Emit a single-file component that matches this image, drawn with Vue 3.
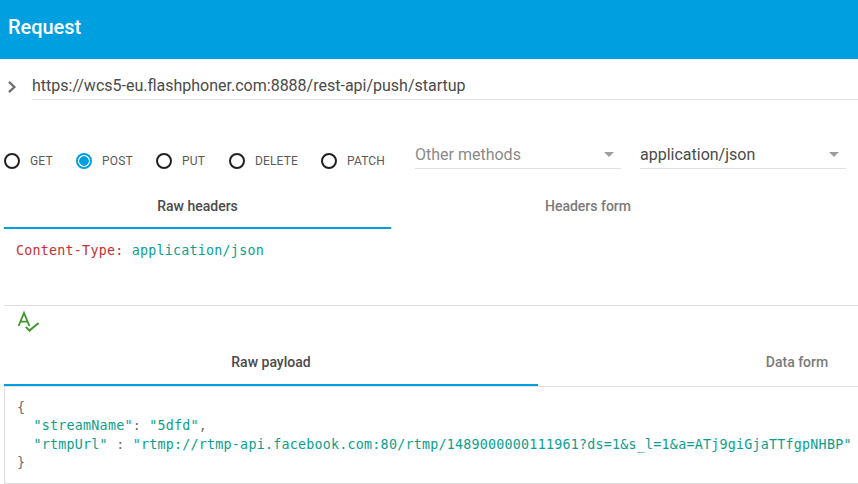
<script setup>
const methods = [
  { name: 'GET', checked: false, w: 72 },
  { name: 'POST', checked: true, w: 80 },
  { name: 'PUT', checked: false, w: 73 },
  { name: 'DELETE', checked: false, w: 92 },
  { name: 'PATCH', checked: false, w: 85 },
]
</script>

<template>
  <div class="page">
    <header class="bar">Request</header>
    <div class="url-row">
      <svg class="chev" width="12" height="14" viewBox="0 0 12 14"><path d="M3 1.8 L8.4 7 L3 12.2" fill="none" stroke="#6f6f6f" stroke-width="2.3"/></svg>
      <div class="url">https://wcs5-eu.flashphoner.com:8888/rest-api/push/startup</div>
    </div>
    <div class="method-row">
      <div class="radios">
        <div v-for="m in methods" :key="m.name" class="radio" :style="{ width: m.w + 'px' }">
          <span class="dot" :class="{ on: m.checked }"></span>
          <span class="label">{{ m.name }}</span>
        </div>
      </div>
      <div class="select other"><span>Other methods</span><i class="caret"></i></div>
      <div class="select ctype"><span>application/json</span><i class="caret"></i></div>
    </div>
    <div class="tabs headers-tabs">
      <div class="tab active t1">Raw headers</div>
      <div class="tab t2">Headers form</div>
    </div>
    <div class="editor head-ed">
      <div class="code"><span class="red">Content-Type:</span> <span class="teal">application/json</span></div>
    </div>
    <div class="lint">
      <svg width="24" height="24" viewBox="0 0 24 24"><path d="M1.6 16 L7 3 L12.4 16 M3.6 11.6 H10.4" fill="none" stroke="#43982d" stroke-width="1.9"/><path d="M8.8 16.8 L12.4 20.6 L21.6 13" fill="none" stroke="#43982d" stroke-width="1.9"/></svg>
    </div>
    <div class="tabs payload-tabs">
      <div class="tab active p1">Raw payload</div>
      <div class="tab p2">Data form</div>
    </div>
    <div class="payload code">
      <div class="gray">{</div>
      <div class="ind"><span class="teal">"streamName"</span><span class="gray">:</span> <span class="teal">"5dfd"</span><span class="gray">,</span></div>
      <div class="ind"><span class="teal">"rtmpUrl"</span> <span class="gray">:</span> <span class="teal">"rtmp://rtmp-api.facebook.com:80/rtmp/1489000000111961?ds=1&amp;s_l=1&amp;a=ATj9giGjaTTfgpNHBP"</span></div>
      <div class="gray">}</div>
    </div>
  </div>
</template>

<style>
html, body { margin: 0; background: #fff; overflow: hidden; }
</style>

<style scoped>
.page { width: 858px; height: 484px; overflow: hidden; font-family: Roboto, sans-serif; color: #424242; background: #fff; }
.bar { height: 59px; background: #00a0e0; color: #fff; font-size: 20px; font-weight: 500; letter-spacing: -.05px; line-height: 54px; padding-left: 8px; box-sizing: border-box; }
.url-row { display: flex; align-items: flex-start; height: 41px; padding-left: 6px; }
.chev { margin-top: 21px; margin-right: 14px; flex: none; }
.url { flex: 1; height: 41px; box-sizing: border-box; border-bottom: 1px solid #e0e0e0; font-size: 16px; line-height: 53px; color: #4a4a4a; white-space: nowrap; }
.method-row { display: flex; align-items: flex-start; height: 87px; padding-top: 40px; box-sizing: border-box; padding-left: 4px; }
.radios { display: flex; width: 411px; flex: none; padding-top: 13px; }
.radio { display: flex; align-items: center; height: 16px; flex: none; }
.dot { width: 16px; height: 16px; box-sizing: border-box; border: 2px solid #212121; border-radius: 50%; margin-right: 10px; flex: none; }
.dot.on { border-color: #00a0e0; background: radial-gradient(circle, #00a0e0 0 4.5px, #fff 5px); }
.label { font-size: 12px; letter-spacing: .15px; color: #5a5a5a; }
.select { display: flex; align-items: center; justify-content: space-between; height: 29px; box-sizing: border-box; border-bottom: 1px solid #e0e0e0; font-size: 16px; line-height: 30px; padding-right: 7px; flex: none; }
.select span { position: relative; top: 1px; }
.other { width: 206px; color: #8a8a8a; margin-right: 19px; }
.ctype { width: 206px; color: #4a4a4a; }
.caret { width: 0; height: 0; border-left: 5px solid transparent; border-right: 5px solid transparent; border-top: 5px solid #9e9e9e; margin-top: 1px; }
.tabs { display: flex; margin-left: 4px; font-size: 14px; font-weight: 500; }
.tab { text-align: center; box-sizing: border-box; color: #7a7a7a; flex: none; }
.tab.active { color: #4a4a4a; border-bottom: 2px solid #00a0e0; }
.headers-tabs { height: 42px; }
.t1 { width: 387px; height: 42px; line-height: 38px; }
.t2 { width: 394px; line-height: 38px; }
.code { font-family: "DejaVu Sans Mono", monospace; font-size: 13.33px; letter-spacing: .24px; line-height: 19px; white-space: pre; }
.red { color: #c62f30; }
.teal { color: #0b9e8e; }
.gray { color: #6e6e6e; }
.ind { padding-left: 16.5px; }
.head-ed { height: 77px; margin-left: 4px; box-sizing: border-box; border-bottom: 1px solid #e0e0e0; padding: 12px 0 0 12px; }
.lint { height: 35px; padding: 4px 0 0 17px; box-sizing: border-box; }
.lint svg { display: block; }
.payload-tabs { height: 45px; border-bottom: 1px solid #e0e0e0; box-sizing: content-box; }
.p1 { width: 534px; height: 45px; line-height: 43px; }
.p2 { width: 518px; line-height: 43px; }
.payload { margin-left: 4px; height: 97px; box-sizing: border-box; border-left: 1px solid #e0e0e0; border-bottom: 1px solid #e0e0e0; padding: 12px 0 0 12px; line-height: 18.3px; }
</style>
